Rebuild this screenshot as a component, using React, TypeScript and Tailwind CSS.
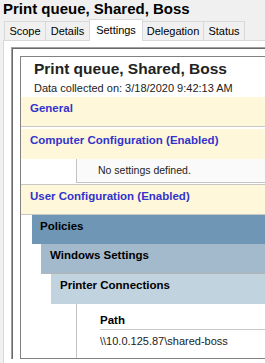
import React from "react";

const tabs = [
    { label: "Scope", w: "w-[42px]" },
    { label: "Details", w: "w-[45px]" },
    { label: "Settings", w: "w-[54px]", active: true },
    { label: "Delegation", w: "w-[62px]" },
    { label: "Status", w: "w-[42px]" },
];

function Tabs() {
    return (
        <div className="flex items-start h-[22px] pl-[4px] relative z-10">
            {tabs.map((t, i) =>
                t.active ? (
                    <div
                        key={t.label}
                        className={`${t.w} ${i > 0 ? "-ml-px" : ""} h-[22px] bg-white border border-b-0 border-[#d9d9d9] flex items-center justify-center text-[11px] text-black relative z-10`}
                    >
                        {t.label}
                    </div>
                ) : (
                    <div
                        key={t.label}
                        className={`${t.w} ${i > 0 ? "-ml-px" : ""} mt-[2px] h-[19px] bg-[#f0f0f0] border border-b-0 border-[#d9d9d9] flex items-center justify-center pt-px text-[11px] text-black`}
                    >
                        {t.label}
                    </div>
                )
            )}
        </div>
    );
}

function CreamBand({ children, className = "" }: { children: React.ReactNode; className?: string }) {
    return (
        <div className={`bg-[#fef7da] pl-[9px] pt-[3px] text-[11.5px] leading-[17px] font-bold text-[#3333cc] ${className}`}>
            {children}
        </div>
    );
}

export default function App() {
    return (
        <div className="w-[265px] h-[363px] overflow-hidden bg-[#f0f0f0] font-['Liberation_Sans',Arial,sans-serif] text-black">
            <div className="h-[19px] pl-[3px] text-[15px] font-bold leading-[17px]">Print queue, Shared, Boss</div>
            <Tabs />
            {/* tab page */}
            <div className="-mt-px ml-[3px] w-[400px] bg-white border-t border-l border-[#d9d9d9] pt-[6px] pl-[7px] h-[330px]">
                {/* sunken frame */}
                <div className="border-t border-l border-[#a0a0a0]">
                    <div className="border-t border-l border-[#696969] pt-[7px] pl-[7px]">
                        {/* report */}
                        <div className="h-[303px] border border-r-0 border-[#828282] overflow-hidden">
                            <div className="h-[40px] pt-[3px] pl-[13px]">
                                <div className="text-[15.5px] leading-[18px] font-bold text-[#222]">Print queue, Shared, Boss</div>
                                <div className="mt-[3px] text-[11px] leading-[14px] text-[#222]">
                                    Data collected on: 3/18/2020 9:42:13 AM
                                </div>
                            </div>

                            <CreamBand className="h-[30px] border-b border-[#c8c8c8]">General</CreamBand>
                            <CreamBand className="mt-[2px] h-[30px]">Computer Configuration (Enabled)</CreamBand>
                            <div className="ml-[55px] h-[24px] bg-[#fafafa] border-l border-b border-[#c4c4c4] pl-[21px] flex items-center text-[10.5px] text-[#222]">
                                No settings defined.
                            </div>
                            <CreamBand className="mt-px h-[31px] border-t border-b border-[#c8c8c8]">
                                User Configuration (Enabled)
                            </CreamBand>

                            <div className="ml-[11px] h-[29px] bg-[#6f96b4] pl-[8px] pt-[3px] text-[11.5px] leading-[17px] font-bold">
                                Policies
                            </div>
                            <div className="ml-[20px] h-[30px] bg-[#a3b9cc] border-b border-[#b4b4b4] pl-[9px] pt-[3px] text-[11.5px] leading-[17px] font-bold">
                                Windows Settings
                            </div>
                            <div className="ml-[30px] h-[30px] bg-[#c0d3df] pl-[9px] pt-[3px] text-[11.5px] leading-[17px] font-bold">
                                Printer Connections
                            </div>
                            <div className="ml-[55px] h-[60px] border-l border-[#c4c4c4] pl-[23px]">
                                <div className="pt-[8px] leading-[17px] text-[11.5px] font-bold border-b border-[#c8c8c8]">
                                    Path
                                </div>
                                <div className="pt-[4px] text-[11px] leading-[14px] text-[#222]">\\10.0.125.87\shared-boss</div>
                            </div>
                        </div>
                    </div>
                </div>
            </div>
        </div>
    );
}
